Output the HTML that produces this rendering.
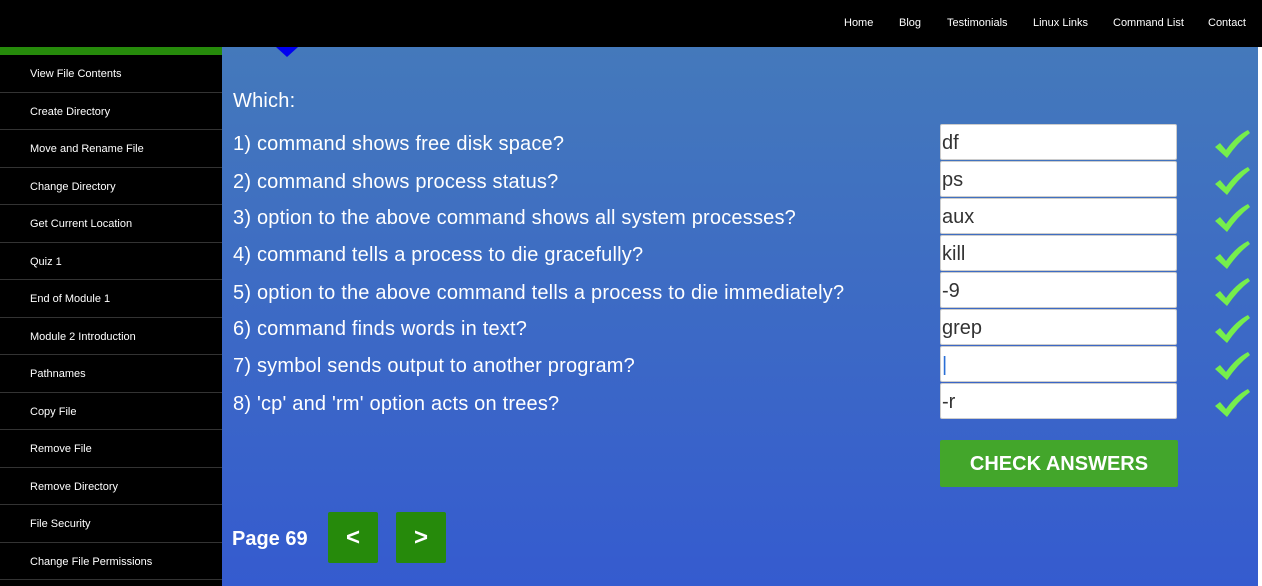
<!DOCTYPE html>
<html><head><style>
*{margin:0;padding:0;box-sizing:border-box}
body{width:1262px;height:586px;overflow:hidden;background:#fff;font-family:"Liberation Sans",sans-serif;position:relative}
.top{position:absolute;left:0;top:0;width:1262px;height:47px;background:#000}
.nav{position:absolute;top:17px;font-size:11px;color:#fff}
.main{position:absolute;left:222px;top:47px;width:1036px;height:539px;background:linear-gradient(#4479bb,#355bcf)}
.side{position:absolute;left:0;top:47px;width:222px;height:539px;background:#000}
.green{height:8px;background:#268a0b}
.item{height:37.5px;border-bottom:1px solid #333;color:#fff;font-size:11px;padding-left:30px;line-height:39px}
.tri{position:absolute;left:276px;top:47px;width:0;height:0;border-left:11px solid transparent;border-right:11px solid transparent;border-top:10px solid #0000f0}
.q{position:absolute;left:233px;color:#fff;font-size:20px;letter-spacing:0.2px}
.in{position:absolute;left:940px;width:237px;height:36px;background:#fff;border:1px solid #ccc;border-radius:2px;font-size:20px;color:#333;padding-left:1px;line-height:36px}
.ck{position:absolute;left:1214px}
.btn{position:absolute;left:940px;top:440px;width:238px;height:47px;background:#43a62b;border-radius:2px;color:#fff;font-weight:bold;font-size:20px;text-align:center;line-height:48px}
.pg{position:absolute;top:512px;width:50px;height:51px;background:#268a0b;border-radius:2px;color:#fff;font-weight:bold;font-size:24px;text-align:center;line-height:52px}
</style></head><body>
<div class="top"></div>
<div class="nav" style="left:844px">Home</div>
<div class="nav" style="left:899px">Blog</div>
<div class="nav" style="left:947px">Testimonials</div>
<div class="nav" style="left:1033px">Linux Links</div>
<div class="nav" style="left:1113px">Command List</div>
<div class="nav" style="left:1208px">Contact</div>
<div class="main"></div>
<div class="side"><div class="green"></div>
<div class="item">View File Contents</div><div class="item">Create Directory</div><div class="item">Move and Rename File</div><div class="item">Change Directory</div><div class="item">Get Current Location</div><div class="item">Quiz 1</div><div class="item">End of Module 1</div><div class="item">Module 2 Introduction</div><div class="item">Pathnames</div><div class="item">Copy File</div><div class="item">Remove File</div><div class="item">Remove Directory</div><div class="item">File Security</div><div class="item">Change File Permissions</div>
</div>
<div class="tri"></div>
<div class="q" style="top:90px">Which:</div>
<div class="q" style="top:133px">1) command shows free disk space?</div>
<div class="q" style="top:171px">2) command shows process status?</div>
<div class="q" style="top:207px">3) option to the above command shows all system processes?</div>
<div class="q" style="top:244px">4) command tells a process to die gracefully?</div>
<div class="q" style="top:282px">5) option to the above command tells a process to die immediately?</div>
<div class="q" style="top:318px">6) command finds words in text?</div>
<div class="q" style="top:355px">7) symbol sends output to another program?</div>
<div class="q" style="top:393px">8) 'cp' and 'rm' option acts on trees?</div>
<div class="in" style="top:124px">df</div>
<div class="in" style="top:161px">ps</div>
<div class="in" style="top:198px">aux</div>
<div class="in" style="top:235px">kill</div>
<div class="in" style="top:272px">-9</div>
<div class="in" style="top:309px">grep</div>
<div class="in" style="top:346px"><span style="color:#2a6fd6">|</span></div>
<div class="in" style="top:383px">-r</div>
<svg class="ck" style="top:128px" width="38" height="32" viewBox="0 0 38 32"><path d="M1 19 L6 15 L12 22 Q22 8 34 2 L36 5 Q24 14 13 30 Z" fill="#76ee4c"/></svg>
<svg class="ck" style="top:165px" width="38" height="32" viewBox="0 0 38 32"><path d="M1 19 L6 15 L12 22 Q22 8 34 2 L36 5 Q24 14 13 30 Z" fill="#76ee4c"/></svg>
<svg class="ck" style="top:202px" width="38" height="32" viewBox="0 0 38 32"><path d="M1 19 L6 15 L12 22 Q22 8 34 2 L36 5 Q24 14 13 30 Z" fill="#76ee4c"/></svg>
<svg class="ck" style="top:239px" width="38" height="32" viewBox="0 0 38 32"><path d="M1 19 L6 15 L12 22 Q22 8 34 2 L36 5 Q24 14 13 30 Z" fill="#76ee4c"/></svg>
<svg class="ck" style="top:276px" width="38" height="32" viewBox="0 0 38 32"><path d="M1 19 L6 15 L12 22 Q22 8 34 2 L36 5 Q24 14 13 30 Z" fill="#76ee4c"/></svg>
<svg class="ck" style="top:313px" width="38" height="32" viewBox="0 0 38 32"><path d="M1 19 L6 15 L12 22 Q22 8 34 2 L36 5 Q24 14 13 30 Z" fill="#76ee4c"/></svg>
<svg class="ck" style="top:350px" width="38" height="32" viewBox="0 0 38 32"><path d="M1 19 L6 15 L12 22 Q22 8 34 2 L36 5 Q24 14 13 30 Z" fill="#76ee4c"/></svg>
<svg class="ck" style="top:387px" width="38" height="32" viewBox="0 0 38 32"><path d="M1 19 L6 15 L12 22 Q22 8 34 2 L36 5 Q24 14 13 30 Z" fill="#76ee4c"/></svg>
<div class="btn">CHECK ANSWERS</div>
<div style="position:absolute;left:232px;top:528px;color:#fff;font-weight:bold;font-size:20px">Page 69</div>
<div class="pg" style="left:328px">&lt;</div>
<div class="pg" style="left:396px">&gt;</div>
</body></html>
